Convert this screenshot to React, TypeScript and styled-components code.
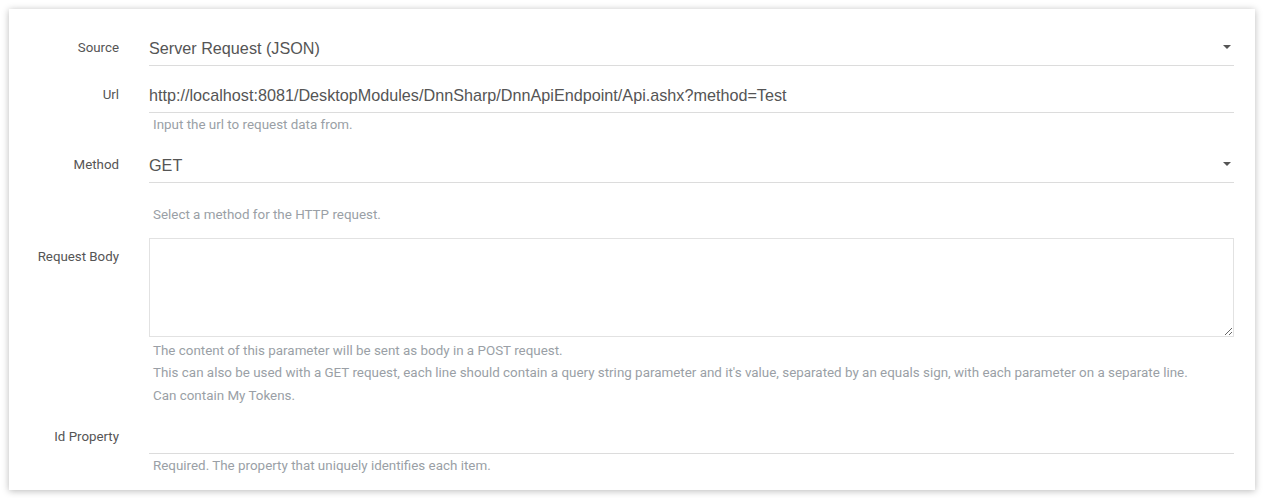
import React from "react";
import styled, { createGlobalStyle } from "styled-components";

const Global = createGlobalStyle`
  html, body { margin: 0; padding: 0; background: #ffffff; }
  body { font-family: Roboto, "Liberation Sans", Arial, sans-serif; }
`;

const Page = styled.div`
  padding: 9px 10px 8px 9px;
`;

const Card = styled.div`
  background: #fff;
  box-shadow: 0 1px 7px rgba(0, 0, 0, 0.28);
  padding: 22px 21px 13px 0;
  display: grid;
  grid-template-columns: 110px 1fr;
  column-gap: 30px;
`;

const Label = styled.div<{ $top?: number }>`
  font-family: Roboto, Arial, sans-serif;
  font-size: 13.3px;
  color: #555;
  text-align: right;
  line-height: 16px;
  padding-top: ${(p) => p.$top ?? 10}px;
`;

const Field = styled.div<{ $gap?: number }>`
  display: flex;
  flex-direction: column;
  margin-bottom: ${(p) => p.$gap ?? 12}px;
`;

const Line = styled.div`
  position: relative;
  height: 34px;
  border-bottom: 1px solid #dcdcdc;
  display: flex;
  align-items: center;
  font-family: "Liberation Sans", Arial, sans-serif;
  font-size: 16.2px;
  color: #555;
`;

const Caret = styled.span`
  position: absolute;
  right: 3px;
  top: 14px;
  width: 0;
  height: 0;
  border-left: 4px solid transparent;
  border-right: 4px solid transparent;
  border-top: 4px solid #555;
`;

const Area = styled.textarea`
  box-sizing: border-box;
  width: 100%;
  height: 99px;
  border: 1px solid #e2e2e2;
  margin: 0;
  resize: vertical;
  outline: none;
  display: block;
`;

const Help = styled.div<{ $mt?: number }>`
  font-family: Roboto, Arial, sans-serif;
  font-size: 13.4px;
  color: #9a9fa6;
  line-height: 22px;
  padding-left: 4px;
  margin-top: ${(p) => p.$mt ?? 1}px;
`;

const HelpLine = styled.div`
  line-height: 22.3px;
`;

export default function App() {
  return (
    <>
      <Global />
      <Page>
        <Card>
          <Label $top={9}>Source</Label>
          <Field>
            <Line>
              Server Request (JSON)
              <Caret />
            </Line>
          </Field>

          <Label $top={9}>Url</Label>
          <Field>
            <Line>http://localhost:8081/DesktopModules/DnnSharp/DnnApiEndpoint/Api.ashx?method=Test</Line>
            <Help>Input the url to request data from.</Help>
          </Field>

          <Label $top={9}>Method</Label>
          <Field>
            <Line>
              GET
              <Caret />
            </Line>
            <Help $mt={21}>Select a method for the HTTP request.</Help>
          </Field>

          <Label $top={11}>Request Body</Label>
          <Field $gap={12}>
            <Area />
            <Help $mt={3}>
              <HelpLine>The content of this parameter will be sent as body in a POST request.</HelpLine>
              <HelpLine>
                This can also be used with a GET request, each line should contain a query string parameter and it's value, separated by an equals sign, with each parameter on a separate line.
              </HelpLine>
              <HelpLine>Can contain My Tokens.</HelpLine>
            </Help>
          </Field>

          <Label $top={10}>Id Property</Label>
          <Field $gap={0}>
            <Line />
            <Help>Required. The property that uniquely identifies each item.</Help>
          </Field>
        </Card>
      </Page>
    </>
  );
}
